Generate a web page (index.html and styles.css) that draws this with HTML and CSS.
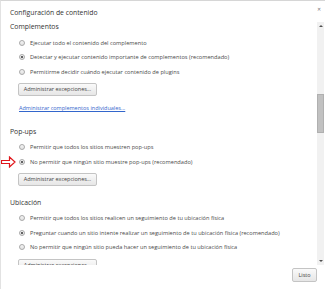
FILE: index.html
```html
<!DOCTYPE html>
<html>
  <head>
    <title>Configuración de contenido</title>
    <meta name="viewport" content="width=device-width, initial-scale=1" />
    <link rel="stylesheet" href="styles.css">
  </head>
  <body>
    <div class="dialog">
      <div class="header">
        <span class="title">Configuración de contenido</span>
        <span class="close">&#x2715;</span>
      </div>

      <div class="body">
        <div class="content">
          <!-- Complementos -->
          <div class="section first">
            <h3>Complementos</h3>
            <div class="options">
              <label class="option"><span class="radio"></span>Ejecutar todo el contenido del complemento</label>
              <label class="option"><span class="radio checked"></span>Detectar y ejecutar contenido importante de complementos (recomendado)</label>
              <label class="option"><span class="radio"></span>Permitirme decidir cuándo ejecutar contenido de plugins</label>
            </div>
            <button class="btn">Administrar excepciones...</button>
            <a class="link" href="#">Administrar complementos individuales...</a>
          </div>

          <!-- Pop-ups -->
          <div class="section popups">
            <h3>Pop-ups</h3>
            <div class="options">
              <label class="option"><span class="radio"></span>Permitir que todos los sitios muestren pop-ups</label>
              <label class="option marked">
                <svg class="arrow" width="16" height="12" viewBox="0 0 16 12">
                  <path d="M1.5 4.5 H9.5 V1 L15 6 L9.5 11 V7.5 H1.5 Z" fill="#fff" stroke="#e0161b" stroke-width="1.2"/>
                </svg>
                <span class="radio checked"></span>No permitir que ningún sitio muestre pop-ups (recomendado)
              </label>
            </div>
            <button class="btn">Administrar excepciones...</button>
          </div>

          <!-- Ubicación -->
          <div class="section">
            <h3>Ubicación</h3>
            <div class="options">
              <label class="option"><span class="radio"></span>Permitir que todos los sitios realicen un seguimiento de tu ubicación física</label>
              <label class="option"><span class="radio checked"></span>Preguntar cuando un sitio intente realizar un seguimiento de tu ubicación física (recomendado)</label>
              <label class="option"><span class="radio"></span>No permitir que ningún sitio pueda hacer un seguimiento de tu ubicación física</label>
            </div>
            <button class="btn">Administrar excepciones...</button>
          </div>
        </div>

        <div class="scrollbar">
          <span class="sb-arrow up"></span>
          <div class="sb-track">
            <div class="sb-thumb"></div>
          </div>
          <span class="sb-arrow down"></span>
        </div>
      </div>

      <div class="footer">
        <button class="btn done">Listo</button>
      </div>
    </div>
  </body>
</html>
```

FILE: styles.css
```css
/* Page */
body {
  margin: 0;
  background: #fff;
  font-family: "Open Sans", "Noto Sans", sans-serif;
  color: #4a4a4a;
}

.dialog {
  width: 325px;
  height: 289px;
  box-sizing: border-box;
  border-top: 1px solid #d6d6d6;
  border-left: 1px solid #e2e2e2;
  display: flex;
  flex-direction: column;
}

/* Header */
.header {
  height: 21px;
  display: flex;
  align-items: center;
  justify-content: space-between;
  padding: 0 4px 0 9px;
}

.title {
  font-size: 6.8px;
  color: #333;
  margin-top: 2px;
}

.close {
  font-size: 5px;
  color: #777;
  align-self: flex-start;
  margin-top: 5px;
}

/* Scrolling body */
.body {
  height: 243px;
  display: flex;
}

.content {
  flex: 1;
  overflow: hidden;
  padding-left: 9px;
}

.section {
  margin-top: 11.5px;
}

.section.first {
  margin-top: 0;
}

.section.popups {
  margin-top: 13.5px;
}

h3 {
  margin: 0;
  height: 9px;
  line-height: 9px;
  font-size: 6.85px;
  font-weight: normal;
  color: #333;
}

.options {
  margin-top: 4.5px;
  padding-left: 9px;
}

.option {
  position: relative;
  display: flex;
  align-items: center;
  height: 14.5px;
  font-size: 5.65px;
  white-space: nowrap;
}

.radio {
  width: 6px;
  height: 6px;
  box-sizing: border-box;
  border: 1px solid #a9a9a9;
  border-radius: 50%;
  background: linear-gradient(#f4f4f4, #e2e2e2);
  margin-right: 5px;
  display: flex;
  align-items: center;
  justify-content: center;
  flex-shrink: 0;
}

.radio.checked::after {
  content: "";
  width: 2.4px;
  height: 2.4px;
  border-radius: 50%;
  background: #333;
}

.arrow {
  position: absolute;
  left: -19px;
  top: 1.5px;
}

/* Buttons and links */
.btn {
  display: block;
  width: 79px;
  height: 13px;
  margin: 4px 0 0 8px;
  padding: 0;
  box-sizing: border-box;
  border: 1px solid #c4c4c4;
  border-radius: 2px;
  background: linear-gradient(#fafafa, #e6e6e6);
  font-family: inherit;
  font-size: 5.5px;
  color: #444;
  line-height: 11px;
  text-align: center;
  white-space: nowrap;
}

.link {
  display: block;
  margin: 7px 0 0 9px;
  height: 10px;
  line-height: 10px;
  font-size: 5.5px;
  color: #3366cc;
}

/* Fake scrollbar */
.scrollbar {
  width: 7px;
  margin-right: 1px;
  background: #f1f1f1;
  display: flex;
  flex-direction: column;
  align-items: center;
}

.sb-arrow {
  width: 0;
  height: 0;
  border-left: 2px solid transparent;
  border-right: 2px solid transparent;
  margin: 3px 0;
}

.sb-arrow.up {
  border-bottom: 2px solid #505050;
}

.sb-arrow.down {
  border-top: 2px solid #505050;
}

.sb-track {
  flex: 1;
  width: 100%;
}

.sb-thumb {
  margin-top: 64px;
  height: 39px;
  background: #c1c1c1;
  border: 1px solid #b0b0b0;
  box-sizing: border-box;
}

/* Footer */
.footer {
  flex: 1;
  display: flex;
  justify-content: flex-end;
  align-items: flex-start;
  padding: 3px 8px 0 0;
}

.btn.done {
  margin: 0;
  width: 25px;
  height: 14px;
}
```
